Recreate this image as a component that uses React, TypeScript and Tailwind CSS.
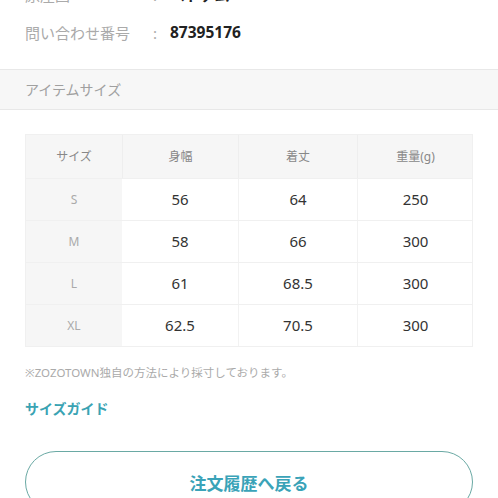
const rows = [
  { size: "S", width: "56", length: "64", weight: "250" },
  { size: "M", width: "58", length: "66", weight: "300" },
  { size: "L", width: "61", length: "68.5", weight: "300" },
  { size: "XL", width: "62.5", length: "70.5", weight: "300" },
];

const font = { fontFamily: '"Noto Sans", "Noto Sans CJK JP", sans-serif' };

export default function App() {
  return (
    <div className="w-[498px] h-[498px] overflow-hidden bg-white" style={font}>
      {/* ── Item info ────────────────────── */}
      <div className="-mt-[24px] px-[25px]">
        <div className="flex items-center h-[38px] text-[15px]">
          <span className="w-[128px] text-[#aaaaaa]">原産国</span>
          <span className="w-[17px] text-[#aaaaaa]">:</span>
          <span className="font-bold text-[#222]">ベトナム</span>
        </div>
        <div className="flex items-center h-[38px] text-[15px]">
          <span className="w-[128px] text-[#aaaaaa]">問い合わせ番号</span>
          <span className="w-[17px] text-[#aaaaaa]">:</span>
          <span className="font-bold text-[#222] text-[15.5px]">87395176</span>
        </div>
      </div>

      {/* ── Section header ───────────────── */}
      <div className="mt-[17px] h-[41px] flex items-center px-[25px] bg-[#f7f7f7] border-y border-[#e8e8e8]">
        <span className="text-[14px] text-[#a0a0a0]">アイテムサイズ</span>
      </div>

      {/* ── Size table ───────────────────── */}
      <div className="mt-[24px] mx-[25px] border border-[#f0f0f0]">
        <div className="grid grid-cols-[96px_116px_119px_116px] h-[43px] bg-[#f6f6f6] text-[12px] text-[#888]">
          <div className="flex items-center justify-center">サイズ</div>
          <div className="flex items-center justify-center border-l border-[#eeeeee]">身幅</div>
          <div className="flex items-center justify-center border-l border-[#eeeeee]">着丈</div>
          <div className="flex items-center justify-center border-l border-[#eeeeee]">重量(g)</div>
        </div>
        {rows.map((r) => (
          <div
            key={r.size}
            className="grid grid-cols-[96px_116px_119px_116px] h-[42px] border-t border-[#f0f0f0] text-[15px] text-[#333]"
          >
            <div className="flex items-center justify-center bg-[#f6f6f6] text-[12px] text-[#aaa]">{r.size}</div>
            <div className="flex items-center justify-center">{r.width}</div>
            <div className="flex items-center justify-center border-l border-[#f2f2f2]">{r.length}</div>
            <div className="flex items-center justify-center border-l border-[#f2f2f2]">{r.weight}</div>
          </div>
        ))}
      </div>

      <p className="mt-[17px] px-[25px] text-[11.5px] text-[#aaa]">
        ※ZOZOTOWN独自の方法により採寸しております。
      </p>

      <p className="mt-[17px] px-[25px] text-[14px] font-bold text-[#3aa3b3]">サイズガイド</p>

      <div className="mt-[32px] mx-[25px] h-[62px] rounded-full border border-[#6aa9a4] flex items-center justify-center">
        <span className="text-[17px] font-bold text-[#3aa3b8] mt-[2px]">注文履歴へ戻る</span>
      </div>
    </div>
  );
}
